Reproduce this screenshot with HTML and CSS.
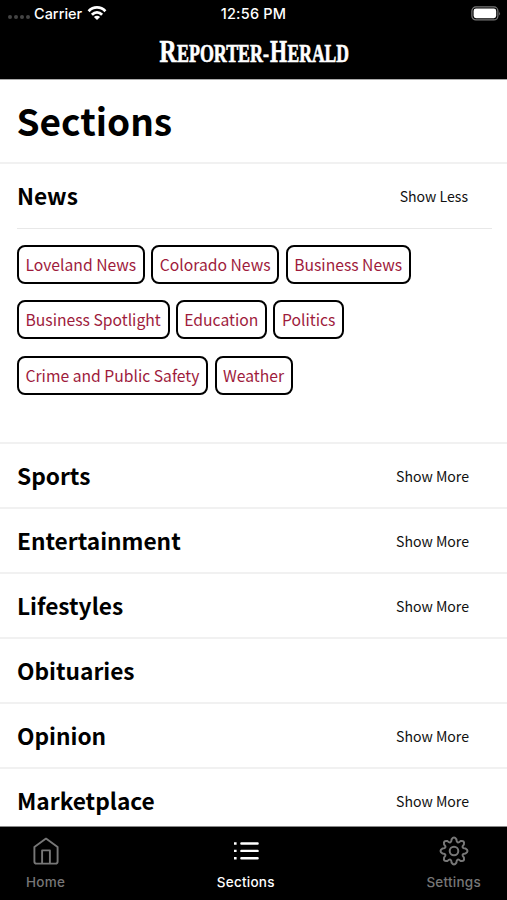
FILE: index.html
```html
<!DOCTYPE html>
<html lang="en">
<head>
    <meta charset="UTF-8">
    <title>Sections - Reporter-Herald</title>
    <link rel="stylesheet" href="styles.css">
</head>
<body>
    <div class="app">
        <header class="header">
            <div class="status-bar">
                <div class="carrier">
                    <span class="signal"><i></i><i></i><i></i><i></i></span>
                    <span class="carrier-name">Carrier</span>
                    <svg class="wifi" width="20" height="16" viewBox="0 0 20 16" fill="none" stroke="#fff" stroke-width="2.8">
                        <path d="M1.6 6.2C6.4 1.2 13.6 1.2 18.4 6.2"/>
                        <path d="M4.9 9.7C7.9 6.7 12.1 6.7 15.1 9.7"/>
                        <path d="M10 15L6.9 11.9C8.7 10.3 11.3 10.3 13.1 11.9Z" fill="#fff" stroke="none"/>
                    </svg>
                </div>
                <div class="clock">12:56 PM</div>
                <div class="battery-wrap">
                    <svg width="30" height="15" viewBox="0 0 30 15">
                        <rect x="0.9" y="0.9" width="26" height="13" rx="4" fill="none" stroke="#777" stroke-width="1.2"/>
                        <rect x="2.6" y="2.6" width="22.6" height="9.6" rx="2.4" fill="#fff"/>
                        <path d="M28.2 5.4Q29.8 7.4 28.2 9.4Z" fill="#777"/>
                    </svg>
                </div>
            </div>
            <svg class="masthead" width="200" height="50" viewBox="0 0 200 50">
                <text class="cap" x="5.5" y="36" textLength="17" lengthAdjust="spacingAndGlyphs">R</text>
                <text x="23" y="36" textLength="92" lengthAdjust="spacingAndGlyphs">EPORTER-</text>
                <text class="cap" x="116" y="36" textLength="17" lengthAdjust="spacingAndGlyphs">H</text>
                <text x="133.5" y="36" textLength="61.5" lengthAdjust="spacingAndGlyphs">ERALD</text>
            </svg>
        </header>

        <main class="content">
            <h1>Sections</h1>

            <section class="section open">
                <div class="section-row">
                    <h2>News</h2>
                    <a class="toggle less">Show Less</a>
                </div>
                <div class="tags">
                    <div class="tag-row">
                        <a class="tag">Loveland News</a>
                        <a class="tag">Colorado News</a>
                        <a class="tag">Business News</a>
                    </div>
                    <div class="tag-row">
                        <a class="tag">Business Spotlight</a>
                        <a class="tag">Education</a>
                        <a class="tag">Politics</a>
                    </div>
                    <div class="tag-row">
                        <a class="tag">Crime and Public Safety</a>
                        <a class="tag">Weather</a>
                    </div>
                </div>
            </section>

            <section class="section"><h2>Sports</h2><a class="toggle">Show More</a></section>
            <section class="section"><h2>Entertainment</h2><a class="toggle">Show More</a></section>
            <section class="section"><h2>Lifestyles</h2><a class="toggle">Show More</a></section>
            <section class="section"><h2>Obituaries</h2></section>
            <section class="section"><h2>Opinion</h2><a class="toggle">Show More</a></section>
            <section class="section"><h2>Marketplace</h2><a class="toggle">Show More</a></section>
        </main>

        <nav class="tab-bar">
            <a class="tab">
                <svg width="30" height="30" viewBox="0 0 30 30" fill="none" stroke="currentColor" stroke-width="1.9" stroke-linejoin="round">
                    <path d="M3.4 10.9L15 2.6L26.6 10.9V25.4Q26.6 27.6 24.4 27.6H5.6Q3.4 27.6 3.4 25.4Z"/>
                    <path d="M11.1 27.4V14.4H18.9V27.4"/>
                </svg>
                <span>Home</span>
            </a>
            <a class="tab active">
                <svg width="30" height="30" viewBox="0 0 30 30" fill="none" stroke="currentColor" stroke-width="2.4">
                    <path d="M3 7.5H5.6M3 14.9H5.6M3 22.3H5.6"/>
                    <path d="M10.4 7.5H26.6M10.4 14.9H26.6M10.4 22.3H26.6" stroke-linecap="round"/>
                </svg>
                <span>Sections</span>
            </a>
            <a class="tab">
                <svg width="30" height="30" viewBox="0 0 30 30" fill="none" stroke="currentColor" stroke-width="2" stroke-linejoin="round">
                    <circle cx="15" cy="15" r="4.3"/>
                    <path d="M12.6 3.4Q15 -0.4 17.4 3.4C17.6 6.8 19.2 7.4 21.5 5.1Q25.9 4.1 24.9 8.5C22.6 10.8 23.2 12.4 26.6 12.6Q30.4 15 26.6 17.4C23.2 17.6 22.6 19.2 24.9 21.5Q25.9 25.9 21.5 24.9C19.2 22.6 17.6 23.2 17.4 26.6Q15 30.4 12.6 26.6C12.4 23.2 10.8 22.6 8.5 24.9Q4.1 25.9 5.1 21.5C7.4 19.2 6.8 17.6 3.4 17.4Q-0.4 15 3.4 12.6C6.8 12.4 7.4 10.8 5.1 8.5Q4.1 4.1 8.5 5.1C10.8 7.4 12.4 6.8 12.6 3.4Z"/>
                </svg>
                <span>Settings</span>
            </a>
        </nav>
    </div>
</body>
</html>
```
FILE: styles.css
```css
* {
    box-sizing: border-box;
}
body {
    margin: 0;
    background-color: white;
    color: #000;
    font-family: "Noto Sans CJK SC", "Noto Sans", sans-serif;
}
.app {
    height: 900px;
    display: flex;
    flex-direction: column;
    overflow: hidden;
}
.header {
    height: 80px;
    flex-shrink: 0;
    background-color: #000;
    border-bottom: 1px solid #aaa;
    color: white;
    display: flex;
    flex-direction: column;
    align-items: center;
}
.status-bar {
    width: 100%;
    height: 26px;
    flex-shrink: 0;
    padding: 0 6px 0 8px;
    display: grid;
    grid-template-columns: 1fr auto 1fr;
    align-items: center;
    font: 500 14.5px Inter, sans-serif;
}
.carrier {
    display: flex;
    align-items: center;
}
.signal {
    display: flex;
    gap: 2px;
    margin: 8px 4px 0 0;
}
.signal i {
    width: 4px;
    height: 4px;
    border-radius: 50%;
    background-color: #444;
}
.wifi {
    margin-left: 5px;
}
.clock {
    margin-right: 2px;
    letter-spacing: 0.2px;
}
.battery-wrap {
    display: flex;
    justify-content: flex-end;
}
.masthead {
    flex-shrink: 0;
    fill: white;
    stroke: white;
    stroke-width: 0.7px;
    font: bold 26px "Liberation Serif", serif;
}
.masthead .cap {
    font-size: 32px;
}
.content {
    flex: 1;
    min-height: 0;
    overflow: hidden;
}
h1, h2 {
    margin: 0;
    font-weight: bold;
}
h1 {
    height: 82px;
    padding-left: 16.5px;
    font-size: 37px;
    line-height: 81px;
}
h2 {
    font-size: 22.7px;
    line-height: 64px;
}
.section {
    height: 65px;
    padding-left: 17px;
    padding-right: 38px;
    border-top: 2px solid #f1f1f1;
    display: flex;
    justify-content: space-between;
    align-items: flex-start;
}
.section.open {
    display: block;
    height: 280px;
    padding-right: 15px;
}
.section-row {
    height: 65px;
    padding-right: 24px;
    border-bottom: 1px solid #e8e8e8;
    display: flex;
    justify-content: space-between;
    align-items: flex-start;
}
.toggle {
    font-size: 14.1px;
    line-height: 65px;
    color: #111;
}
.tags {
    padding-top: 16px;
    display: flex;
    flex-direction: column;
    gap: 16.4px;
}
.tag-row {
    display: flex;
    gap: 6.3px;
}
.tag {
    height: 39px;
    padding: 0 6.8px 0 6.5px;
    border: 2px solid #000;
    border-radius: 8px;
    color: #9e1b3c;
    font-size: 15.7px;
    line-height: 35px;
    white-space: nowrap;
}
.tab-bar {
    height: 74px;
    flex-shrink: 0;
    padding: 9px 26px 0 26px;
    background-color: #000;
    border-top: 1px solid #888;
    display: flex;
    justify-content: space-between;
}
.tab {
    display: flex;
    flex-direction: column;
    align-items: center;
    gap: 7px;
    color: #777;
    font: 500 13.5px/18px Inter, sans-serif;
    letter-spacing: 0.25px;
}
.tab.active {
    color: white;
}
```
